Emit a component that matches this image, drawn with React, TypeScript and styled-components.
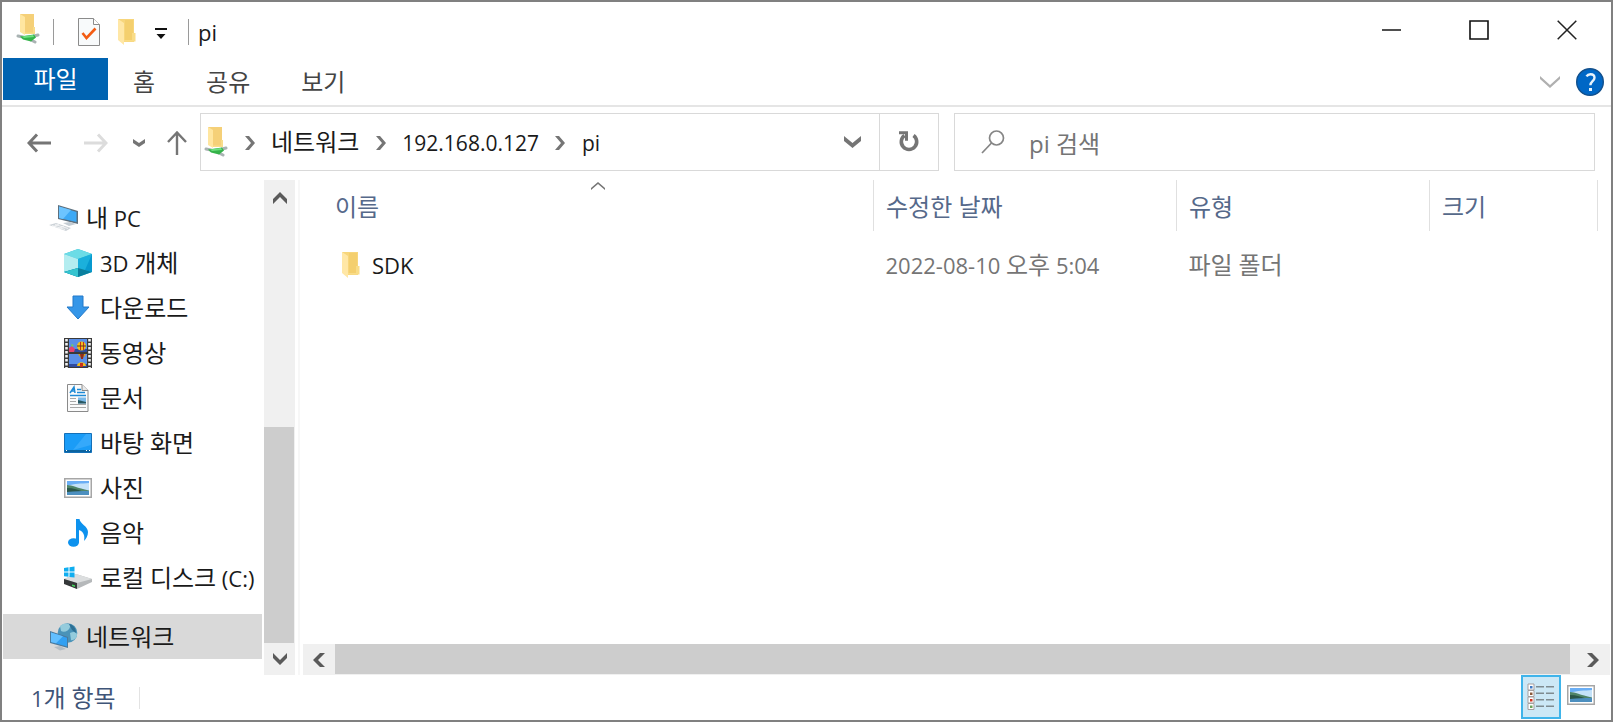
import React from "react";
import styled, { createGlobalStyle, css } from "styled-components";

const GlobalStyle = createGlobalStyle`
  *, *::before, *::after { box-sizing: border-box; }
  body { margin: 0; background: #fff; }
  button, input { font: inherit; color: inherit; }
  button { border: 0; padding: 0; background: none; cursor: default; }
`;

const Window = styled.div`
  display: flex;
  flex-direction: column;
  min-height: 100vh;
  border: 2px solid #808080;
  background: #fff;
  color: #1a1a1a;
  font-family: "Open Sans", "Noto Sans CJK KR", sans-serif;
  font-size: 24px;
  line-height: 32px;
`;

const Latin = styled.span<{ $compact?: boolean }>`
  font-size: ${(p) => (p.$compact ? 21 : 22)}px;
`;

/* Hangul and Latin runs are set in two sizes so that their heights agree. */
function Label({ text, compact }: { text: string; compact?: boolean }) {
  return (
    <>
      {text
        .split(/([\uAC00-\uD7A3]+)/)
        .filter(Boolean)
        .map((run, i) =>
          /[\uAC00-\uD7A3]/.test(run) ? (
            run
          ) : (
            <Latin key={i} $compact={compact}>
              {run}
            </Latin>
          )
        )}
    </>
  );
}

/* ---------- title bar ---------- */

const TitleBar = styled.header`
  display: flex;
  align-items: center;
  height: 56px;
  padding-left: 14px;
`;

const QuickAccess = styled.div`
  display: flex;
  align-items: center;
  padding-top: 4px;
`;

const AppIcon = styled.span`
  display: flex;
  height: 36px;
`;

const QuickButton = styled.button<{ $width: number }>`
  display: flex;
  align-items: center;
  justify-content: center;
  width: ${(p) => p.$width}px;
  height: 32px;
`;

const Separator = styled.span`
  width: 1px;
  height: 26px;
  margin: 0 15px 0 13px;
  background: #9a9a9a;
`;

const TitleSeparator = styled(Separator)`
  margin: 0 9px 0 11px;
`;

const WindowTitle = styled.h1`
  flex: 1;
  margin: 0;
  padding-top: 4px;
  font-size: 22px;
  font-weight: 400;
`;

const CaptionButton = styled.button`
  display: flex;
  align-items: center;
  justify-content: center;
  width: 88px;
  height: 56px;
`;

/* ---------- ribbon tabs ---------- */

const Ribbon = styled.nav`
  display: flex;
  align-items: center;
  height: 49px;
  padding-left: 1px;
  border-bottom: 2px solid #e5e5e5;
`;

const FileTab = styled.button`
  align-self: flex-start;
  width: 105px;
  height: 42px;
  background: #0063b1;
  color: #fff;
`;

const Tabs = styled.div`
  display: flex;
  gap: 51px;
  padding-left: 25px;
`;

const Tab = styled.button`
  color: #444;
`;

const RibbonEnd = styled.div`
  display: flex;
  align-items: center;
  gap: 16px;
  margin-left: auto;
  padding-right: 7px;
`;

const IconButton = styled.button`
  display: flex;
  align-items: center;
  justify-content: center;
`;

/* ---------- address row ---------- */

const AddressRow = styled.div`
  display: flex;
  align-items: center;
  height: 73px;
  padding: 0 16px 3px 15px;
`;

const NavButton = styled.button<{ $width: number }>`
  display: flex;
  align-items: center;
  justify-content: center;
  width: ${(p) => p.$width}px;
  height: 40px;
  padding-top: 2px;
`;

const UpButton = styled(NavButton)`
  margin-left: 6px;
`;

const box = css`
  display: flex;
  align-items: center;
  min-width: 0;
  height: 58px;
  border: 1px solid #d9d9d9;
`;

const AddressBox = styled.div`
  ${box}
  flex: 734 1 0;
  padding-left: 3px;
`;

const Crumb = styled.button`
  white-space: nowrap;
`;

const CrumbArrow = styled.span`
  display: flex;
  justify-content: center;
  width: 43px;
  padding-top: 2px;
`;

const AddressMenu = styled(IconButton)`
  width: 54px;
  height: 100%;
  margin-left: auto;
`;

const Refresh = styled(IconButton)`
  width: 59px;
  height: 100%;
  border-left: 1px solid #d9d9d9;
`;

const SearchBox = styled.label`
  ${box}
  flex: 613 1 0;
  margin-left: 15px;
  padding-left: 26px;
  gap: 24px;
`;

const SearchInput = styled.input`
  flex: 1;
  min-width: 0;
  height: 40px;
  padding: 2px 0 0;
  border: 0;
  outline: 0;
  background: none;
  &::placeholder {
    color: #757575;
    opacity: 1;
  }
`;

/* ---------- main area ---------- */

const Main = styled.div`
  display: flex;
  flex: 1;
`;

const Sidebar = styled.nav`
  width: 262px;
  padding: 15px 2px 16px 1px;
`;

const Tree = styled.ul`
  margin: 0;
  padding: 0;
  list-style: none;
`;

const TreeItem = styled.a<{ $root?: boolean; $selected?: boolean }>`
  display: flex;
  align-items: center;
  gap: ${(p) => (p.$root ? 7 : 8)}px;
  height: 45px;
  margin-top: ${(p) => (p.$selected ? 14 : 0)}px;
  padding-left: ${(p) => (p.$root ? 46 : 61)}px;
  background: ${(p) => (p.$selected ? "#d9d9d9" : "transparent")};
  color: inherit;
  text-decoration: none;
  white-space: nowrap;
  svg {
    flex: none;
  }
`;

const VerticalBar = styled.div`
  display: flex;
  flex-direction: column;
  width: 31px;
  background: #f0f0f0;
`;

const VerticalSpace = styled.div`
  flex: 211 1 0;
`;

const VerticalThumb = styled.div`
  flex: 216 1 0;
  margin-right: 1px;
  background: #cdcdcd;
`;

const ScrollButton = styled(IconButton)<{ $width?: number; $height?: number }>`
  flex: none;
  width: ${(p) => p.$width ?? 31}px;
  height: ${(p) => p.$height ?? 31}px;
`;

const ScrollRightButton = styled(ScrollButton)`
  padding-left: 6px;
`;

const Splitter = styled.div`
  width: 2px;
  margin: 0 3px;
  background: #f7f7f7;
`;

const Content = styled.main`
  display: flex;
  flex: 1;
  flex-direction: column;
  min-width: 0;
`;

const FileTable = styled.table`
  width: calc(100% - 13px);
  border-collapse: collapse;
  table-layout: fixed;
`;

const HeaderCell = styled.th<{ $width?: number }>`
  position: relative;
  width: ${(p) => (p.$width ? p.$width + "px" : "auto")};
  height: 51px;
  padding: 2px 0 0 12px;
  border-right: 1px solid #e0e0e0;
  color: #56698a;
  font-weight: 400;
  text-align: left;
  &:first-child {
    padding-left: 32px;
  }
`;

const SortMark = styled.span`
  position: absolute;
  top: 2px;
  left: 0;
  right: 0;
  display: flex;
  justify-content: center;
  padding-left: 20px;
`;

const Cell = styled.td`
  height: 68px;
  padding: 0 0 0 12px;
  color: #757575;
  white-space: nowrap;
  &:first-child {
    padding-left: 38px;
    color: #1a1a1a;
  }
`;

const FileName = styled.div`
  display: flex;
  align-items: center;
  gap: 11px;
`;

const HorizontalBar = styled.div`
  display: flex;
  height: 31px;
  margin: auto 1px 0 0;
  background: #f0f0f0;
`;

const HorizontalThumb = styled.div`
  flex: 1;
  margin-bottom: 1px;
  background: #cdcdcd;
`;

/* ---------- status bar ---------- */

const StatusBar = styled.footer`
  display: flex;
  align-items: center;
  height: 45px;
  padding: 0 10px 0 29px;
  color: #3f5578;
`;

const StatusRule = styled.span`
  width: 1px;
  height: 22px;
  margin-left: 23px;
  background: #e3e3e3;
`;

const ViewButtons = styled.div`
  display: flex;
  align-self: flex-start;
  margin-left: auto;
`;

const ViewButton = styled(IconButton)<{ $active?: boolean }>`
  width: 40px;
  height: 44px;
  padding-bottom: ${(p) => (p.$active ? 0 : 4)}px;
  border: ${(p) => (p.$active ? "2px solid #3fb4ea" : "0")};
  background: ${(p) => (p.$active ? "#cce8f6" : "transparent")};
`;

/* ---------- icons ---------- */

const FolderIcon = () => (
  <svg width="20" height="28" viewBox="0 0 20 28" aria-hidden="true">
    <path d="M1 1h16v23H5z" fill="#f7d67c" />
    <path d="M8 2h8v21H8z" fill="#f4cf6e" />
    <path d="M15 15h3.500v8.500H7V22h8z" fill="#f9dc87" />
    <path d="M1 1l6 4v22l-6-5z" fill="#ffe7a6" />
  </svg>
);

const NetFolderIcon = () => (
  <svg width="24" height="30" viewBox="0 0 24 30" aria-hidden="true">
    <path d="M4 0h14v19H8z" fill="#f5d078" />
    <path d="M17 13h2v7H8v-1.500h9z" fill="#f8dc8a" />
    <path d="M4 0l5 3v18l-5-3z" fill="#ffe6a0" />
    <path d="M2 22l5 1M18 22l4-1M15 26l4 2" stroke="#a9b3b3" strokeWidth="3" strokeLinecap="round" />
    <path d="M4 22.500l14-2 2 3-5 4-8-2z" fill="#35b34a" />
    <path d="M6 22.500l11-1.500 1 2-10 1z" fill="#6ee07f" />
  </svg>
);

const PropertiesIcon = () => (
  <svg width="22" height="28" viewBox="0 0 22 28" fill="none" aria-hidden="true">
    <path d="M.5.5h15l6 6v21H.5z" fill="#f8fafb" stroke="#8b8b8b" />
    <path d="M15.500.5v6h6" fill="#fff" stroke="#8b8b8b" />
    <path d="M4.500 15l4 5 9-9.500" stroke="#f35c13" strokeWidth="2.600" />
  </svg>
);

const CustomizeIcon = () => (
  <svg width="12" height="16" viewBox="0 0 12 16" aria-hidden="true">
    <path d="M0 4h12v2H0zM1.500 10h9L6 15z" fill="#111" />
  </svg>
);

type Direction = "up" | "down" | "left" | "right";

const turns: Record<Direction, number> = { down: 0, left: 90, up: 180, right: 270 };

type ChevronProps = { dir: Direction; long: number; short: number; weight: number; color: string };

/* A chevron pointing down, with ends cut square to its width, turned to its direction. */
function Chevron({ dir, long, short, weight, color }: ChevronProps) {
  const upright = dir === "up" || dir === "down";
  const w = upright ? long : short;
  const h = upright ? short : long;
  const x = long / 2;
  const y = short / 2;
  return (
    <svg width={w} height={h} viewBox={`${-w / 2} ${-h / 2} ${w} ${h}`} aria-hidden="true">
      <polygon
        transform={`rotate(${turns[dir]})`}
        points={`${-x},${-y} 0,${y - weight} ${x},${-y} ${x},${weight - y} 0,${y} ${-x},${weight - y}`}
        fill={color}
      />
    </svg>
  );
}

const ArrowIcon = ({ flip, color }: { flip?: boolean; color: string }) => (
  <svg width="24" height="20" viewBox="0 0 24 20" fill="none" stroke={color} strokeWidth="3" aria-hidden="true">
    <path d={flip ? "M0 10h22M14 1.500l8 8.500-8 8.500" : "M24 10H2M10 1.500L2 10l8 8.500"} />
  </svg>
);

const UpIcon = () => (
  <svg width="20" height="24" viewBox="0 0 20 24" fill="none" stroke="#757575" strokeWidth="2.400" aria-hidden="true">
    <path d="M10 24V2M1 11l9-9.500 9 9.500" />
  </svg>
);

const RefreshIcon = () => (
  <svg width="20" height="22" viewBox="0 0 20 22" fill="none" stroke="#757575" aria-hidden="true">
    <path d="M14.500 4.500a7.700 7.700 0 1 1-9 0" strokeWidth="3.600" />
    <path d="M0 1.700h7.500v8" strokeWidth="3" />
  </svg>
);

const SearchIcon = () => (
  <svg width="24" height="24" viewBox="0 0 24 24" fill="none" stroke="#858585" strokeWidth="1.700" aria-hidden="true">
    <circle cx="15.500" cy="8" r="7" />
    <path d="M10.500 13L1 23" />
  </svg>
);

const HelpIcon = () => (
  <svg width="28" height="28" viewBox="0 0 28 28" fill="none" aria-hidden="true">
    <circle cx="14" cy="14" r="13.300" fill="#0067c6" stroke="#12508c" strokeWidth="1.400" />
    <path d="M10.500 8.300c1-1.600 2.400-2.100 4-2.100 2.600 0 4 1.400 4 3.500 0 3.300-4.100 3.700-4.100 7.500" stroke="#e8f3fc" strokeWidth="2.400" />
    <path d="M13 20h3v3h-3z" fill="#e8f3fc" />
  </svg>
);

const PcIcon = () => (
  <svg width="30" height="28" viewBox="0 0 30 28" aria-hidden="true">
    <path d="M9 1l20 6v13L9 15z" fill="#5d6f7d" />
    <path d="M10 2.500L27.500 8v10L10 14z" fill="#3da9f5" />
    <path d="M10 2.500L22 6l-8 9-4-1z" fill="#6cc4ff" />
    <path d="M14 19l7-1 6 2-7 2z" fill="#c3ccd3" />
    <path d="M0 21l7-2 15 5-5 3z" fill="#cdd3d8" />
    <path d="M3 21.500l13 4M6 20.500l13 4M4 23l6-3M9 25l6-3" stroke="#fff" strokeWidth=".7" />
  </svg>
);

const CubeIcon = () => (
  <svg width="28" height="28" viewBox="0 0 28 28" aria-hidden="true">
    <path d="M14 0l14 5v18l-14 5-14-5V5z" fill="#25b7d3" />
    <path d="M14 0l14 5-14 5L0 5z" fill="#6cdce6" />
    <path d="M0 5l14 5v9L0 23z" fill="#b3edf0" />
    <path d="M28 5l-14 5v9l14 4z" fill="#1bb0dc" />
    <path d="M28 5v18l-7-2z" fill="#0799cf" />
    <path d="M14 19l14 4-14 5-14-5z" fill="#0a7f9e" />
    <path d="M14 19v9L0 23z" fill="#35c4cf" />
  </svg>
);

const DownloadIcon = () => (
  <svg width="28" height="28" viewBox="0 0 28 28" aria-hidden="true">
    <path d="M9 2h10v11h6L14 25 3 13h6z" fill="#3596e8" stroke="#2379c9" />
  </svg>
);

const VideoIcon = () => (
  <svg width="28" height="30" viewBox="0 0 28 30" aria-hidden="true">
    <path d="M0 0h28v30H0z" fill="#3a3a3a" />
    <path d="M5 1h18v13H5zM5 16h18v13H5z" fill="#5a8fe8" />
    <path d="M5 11h18v3H5zM5 26h18v3H5z" fill="#2f4b9f" />
    <path d="M2.500 1v29M25.500 1v29" stroke="#f2f2f2" strokeWidth="2.600" strokeDasharray="2.600 1.400" />
    <circle cx="17.500" cy="8" r="4.500" fill="#f0be1c" />
    <path d="M16 4h1v8h-1zM19 4h1v8h-1z" fill="#c8321c" />
    <path d="M13 7.500h9v1h-9z" fill="#5f3a20" />
    <path d="M5 10l3-2 3 3-1 3H5z" fill="#e5446e" />
    <path d="M7 6l3 1-2 2z" fill="#6fd35e" />
    <path d="M14 16h8l-2 3h-4z" fill="#d2a01c" />
    <path d="M16 16h4l-1 5h-2z" fill="#8f2b1d" />
    <path d="M13 28c0-5 9-5 9 0z" fill="#f0be1c" />
    <path d="M16 25h3v4h-3z" fill="#c8321c" />
  </svg>
);

const DocumentIcon = () => (
  <svg width="28" height="28" viewBox="0 0 28 28" fill="none" aria-hidden="true">
    <path d="M3.500.5H18l6 6v21H3.500z" fill="#fbfbfb" stroke="#8a8a8a" />
    <path d="M18 .5v6h6" fill="#e9e9e9" stroke="#8a8a8a" />
    <path d="M6 9l4-6 1 6M7.500 7h3M13 5.500h4M13 8.500h8" stroke="#1e8ad6" strokeWidth="1.500" />
    <path d="M6 11.500h16" stroke="#1e8ad6" strokeWidth="1.500" />
    <path d="M6 14.500h6M6 17.500h6M6 20.500h16M6 23.500h16" stroke="#a8a8a8" />
    <path d="M14 13.500h8v6h-8z" fill="#7bb9e8" />
    <path d="M14 16l8 2v1.500h-8z" fill="#2a5862" />
  </svg>
);

const DesktopIcon = () => (
  <svg width="28" height="20" viewBox="0 0 28 20" aria-hidden="true">
    <path d="M.5.5h27v19H.5z" fill="#1a9cf7" stroke="#1470b8" />
    <path d="M27 1v11L9 17 22 1z" fill="#35a9fb" />
    <path d="M1 17h26v2H1z" fill="#0b639f" />
    <path d="M2 17h1v1H2zM22 17h1v1h-1zM25 17h1v1h-1z" fill="#fff" />
  </svg>
);

const PictureIcon = () => (
  <svg width="28" height="20" viewBox="0 0 28 20" aria-hidden="true">
    <path d="M.75.75h26.500v18.500H.75z" fill="#fff" stroke="#a6a6a6" strokeWidth="1.500" />
    <path d="M3 3h22v7H3z" fill="#6aaef5" />
    <path d="M3 8c8-3 14-2 22-3v8H3z" fill="#c4e2f9" />
    <path d="M3 7c5 0 10 3 22 5.500V14H3z" fill="#4f8468" />
    <path d="M3 10c6 0 12 2 17 4H3z" fill="#2a5548" />
    <path d="M3 14c8-1 14-1 22-1v4H3z" fill="#4c8fbf" />
  </svg>
);

const MusicIcon = () => (
  <svg width="28" height="28" viewBox="0 0 28 28" aria-hidden="true">
    <ellipse cx="9.500" cy="23.500" rx="5.500" ry="4.200" fill="#0d92ee" />
    <path d="M12 0h3.500c.5 5 8.500 7 8.500 13 0 4-2 7-4 9 1-5 0-9-5-11v12.500h-3z" fill="#0d92ee" />
  </svg>
);

const DiskIcon = () => (
  <svg width="28" height="24" viewBox="0 0 28 24" aria-hidden="true">
    <path d="M0 13l12-5 16 5v3l-15 7L0 17z" fill="#b5b8ba" />
    <path d="M0 13l12-5 16 5-15 4z" fill="#dcdedf" />
    <path d="M0 13l13 4v6L0 18z" fill="#353839" />
    <path d="M8 18.500l3 .8v1.600l-3-.8z" fill="#42d35a" />
    <path d="M0 2l4.500-.7v4.200H0zM5.500 1.200L10.500.5v5h-5zM0 6.500h4.500v4.300L0 10.300zM5.500 6.500h5v5l-5-.6z" fill="#10aef0" />
  </svg>
);

const NetworkIcon = () => (
  <svg width="30" height="28" viewBox="0 0 30 28" aria-hidden="true">
    <circle cx="18.500" cy="10" r="9.800" fill="#4a93b8" />
    <path d="M11 3c4-4 11-3 10 1s-6 6-9 4zM21 10c4-2 7-1 7 2s-4 6-6 5z" fill="#94cbdc" />
    <path d="M20 1c5 1 7 5 7 9l-4-3z" fill="#2d6f94" />
    <path d="M1 8l18 6v11L1 20z" fill="#4c7a9c" />
    <path d="M2 9.500l16 5.200v8.800L2 19z" fill="#32a0f2" />
    <path d="M2 9.500l12 3.800-7 7L2 19z" fill="#62bfff" />
    <path d="M5 24l6-1 6 3-6 1.500z" fill="#b4bdc4" />
  </svg>
);

const DetailsIcon = () => (
  <svg width="28" height="28" viewBox="0 0 28 28" aria-hidden="true">
    {["#3b78c4", "#8a5a3c", "#d2321e", "#6aa35a"].map((color, i) => (
      <g key={color} transform={`translate(0 ${i * 6.5})`}>
        <path d="M1 1h6v6H1z" fill="#fff" stroke="#a59f9f" />
        <path d="M3 3h2.500v2.500H3z" fill={color} />
        <path d="M9 3h8v1.600H9zM19 3h8v1.600h-8z" fill="#7f8b90" />
      </g>
    ))}
  </svg>
);

/* ---------- page ---------- */

const places = [
  { name: "3D 개체", icon: <CubeIcon /> },
  { name: "다운로드", icon: <DownloadIcon /> },
  { name: "동영상", icon: <VideoIcon /> },
  { name: "문서", icon: <DocumentIcon /> },
  { name: "바탕 화면", icon: <DesktopIcon /> },
  { name: "사진", icon: <PictureIcon /> },
  { name: "음악", icon: <MusicIcon /> },
  { name: "로컬 디스크 (C:)", icon: <DiskIcon /> },
];

const crumbs = ["네트워크", "192.168.0.127", "pi"];

const files = [{ name: "SDK", modified: "2022-08-10 오후 5:04", type: "파일 폴더", size: "" }];

const ScrollArrow = ({ dir }: { dir: Direction }) => (
  <Chevron dir={dir} long={14} short={12} weight={5} color="#5a5a5a" />
);

export default function App() {
  return (
    <Window>
      <GlobalStyle />
      <TitleBar>
        <QuickAccess>
          <AppIcon>
            <NetFolderIcon />
          </AppIcon>
          <Separator />
          <QuickButton $width={40} aria-label="속성">
            <PropertiesIcon />
          </QuickButton>
          <QuickButton $width={36} aria-label="새 폴더">
            <FolderIcon />
          </QuickButton>
          <QuickButton $width={32} aria-label="빠른 실행 도구 모음 사용자 지정">
            <CustomizeIcon />
          </QuickButton>
          <TitleSeparator />
        </QuickAccess>
        <WindowTitle>pi</WindowTitle>
        <CaptionButton aria-label="최소화">
          <svg width="20" height="20" viewBox="0 0 20 20" aria-hidden="true">
            <path d="M1 10h19" stroke="#222" strokeWidth="1.600" />
          </svg>
        </CaptionButton>
        <CaptionButton aria-label="최대화">
          <svg width="20" height="20" viewBox="0 0 20 20" aria-hidden="true">
            <path d="M1 1h18v18H1z" fill="none" stroke="#111" strokeWidth="1.600" />
          </svg>
        </CaptionButton>
        <CaptionButton aria-label="닫기">
          <svg width="20" height="20" viewBox="0 0 20 20" aria-hidden="true">
            <path d="M.7.7l18.600 18.600M19.300.7L.7 19.300" stroke="#222" strokeWidth="1.500" />
          </svg>
        </CaptionButton>
      </TitleBar>

      <Ribbon>
        <FileTab>파일</FileTab>
        <Tabs>
          <Tab>홈</Tab>
          <Tab>공유</Tab>
          <Tab>보기</Tab>
        </Tabs>
        <RibbonEnd>
          <IconButton aria-label="리본 확장">
            <Chevron dir="down" long={20} short={12} weight={3} color="#b0b0b0" />
          </IconButton>
          <IconButton aria-label="도움말">
            <HelpIcon />
          </IconButton>
        </RibbonEnd>
      </Ribbon>

      <AddressRow>
        <NavButton $width={44} aria-label="뒤로">
          <ArrowIcon color="#757575" />
        </NavButton>
        <NavButton $width={70} aria-label="앞으로">
          <ArrowIcon flip color="#dcdcdc" />
        </NavButton>
        <NavButton $width={16} aria-label="최근 위치">
          <Chevron dir="down" long={12} short={8} weight={4} color="#757575" />
        </NavButton>
        <UpButton $width={47} aria-label="위로">
          <UpIcon />
        </UpButton>
        <AddressBox>
          <NetFolderIcon />
          {crumbs.map((crumb) => (
            <React.Fragment key={crumb}>
              <CrumbArrow>
                <Chevron dir="right" long={14} short={10} weight={4} color="#757575" />
              </CrumbArrow>
              <Crumb>
                <Label text={crumb} compact />
              </Crumb>
            </React.Fragment>
          ))}
          <AddressMenu aria-label="이전 위치">
            <Chevron dir="down" long={17} short={12} weight={5} color="#757575" />
          </AddressMenu>
          <Refresh aria-label="새로 고침">
            <RefreshIcon />
          </Refresh>
        </AddressBox>
        <SearchBox>
          <SearchIcon />
          <SearchInput type="text" placeholder="pi 검색" aria-label="pi 검색" />
        </SearchBox>
      </AddressRow>

      <Main>
        <Sidebar>
          <Tree>
            <li>
              <TreeItem href="#pc" $root>
                <PcIcon />
                <span>
                  <Label text="내 PC" />
                </span>
              </TreeItem>
              <Tree>
                {places.map((place) => (
                  <li key={place.name}>
                    <TreeItem href="#place">
                      {place.icon}
                      <span>
                        <Label text={place.name} />
                      </span>
                    </TreeItem>
                  </li>
                ))}
              </Tree>
            </li>
            <li>
              <TreeItem href="#network" $root $selected>
                <NetworkIcon />
                <span>네트워크</span>
              </TreeItem>
            </li>
          </Tree>
        </Sidebar>
        <VerticalBar>
          <ScrollButton $height={36} aria-label="위로 스크롤">
            <ScrollArrow dir="up" />
          </ScrollButton>
          <VerticalSpace />
          <VerticalThumb />
          <ScrollButton $height={32} aria-label="아래로 스크롤">
            <ScrollArrow dir="down" />
          </ScrollButton>
        </VerticalBar>
        <Splitter />
        <Content>
          <FileTable>
            <thead>
              <tr>
                <HeaderCell>
                  이름
                  <SortMark>
                    <Chevron dir="up" long={14} short={8} weight={2} color="#757575" />
                  </SortMark>
                </HeaderCell>
                <HeaderCell $width={303}>수정한 날짜</HeaderCell>
                <HeaderCell $width={253}>유형</HeaderCell>
                <HeaderCell $width={168}>크기</HeaderCell>
              </tr>
            </thead>
            <tbody>
              {files.map((file) => (
                <tr key={file.name}>
                  <Cell>
                    <FileName>
                      <FolderIcon />
                      <span>
                        <Label text={file.name} />
                      </span>
                    </FileName>
                  </Cell>
                  <Cell>
                    <Label text={file.modified} />
                  </Cell>
                  <Cell>
                    <Label text={file.type} />
                  </Cell>
                  <Cell>{file.size}</Cell>
                </tr>
              ))}
            </tbody>
          </FileTable>
          <HorizontalBar>
            <ScrollButton $width={32} aria-label="왼쪽으로 스크롤">
              <ScrollArrow dir="left" />
            </ScrollButton>
            <HorizontalThumb />
            <ScrollRightButton $width={40} aria-label="오른쪽으로 스크롤">
              <ScrollArrow dir="right" />
            </ScrollRightButton>
          </HorizontalBar>
        </Content>
      </Main>

      <StatusBar>
        <span>
          <Label text="1개 항목" />
        </span>
        <StatusRule />
        <ViewButtons>
          <ViewButton $active aria-label="자세히">
            <DetailsIcon />
          </ViewButton>
          <ViewButton aria-label="큰 아이콘">
            <PictureIcon />
          </ViewButton>
        </ViewButtons>
      </StatusBar>
    </Window>
  );
}
